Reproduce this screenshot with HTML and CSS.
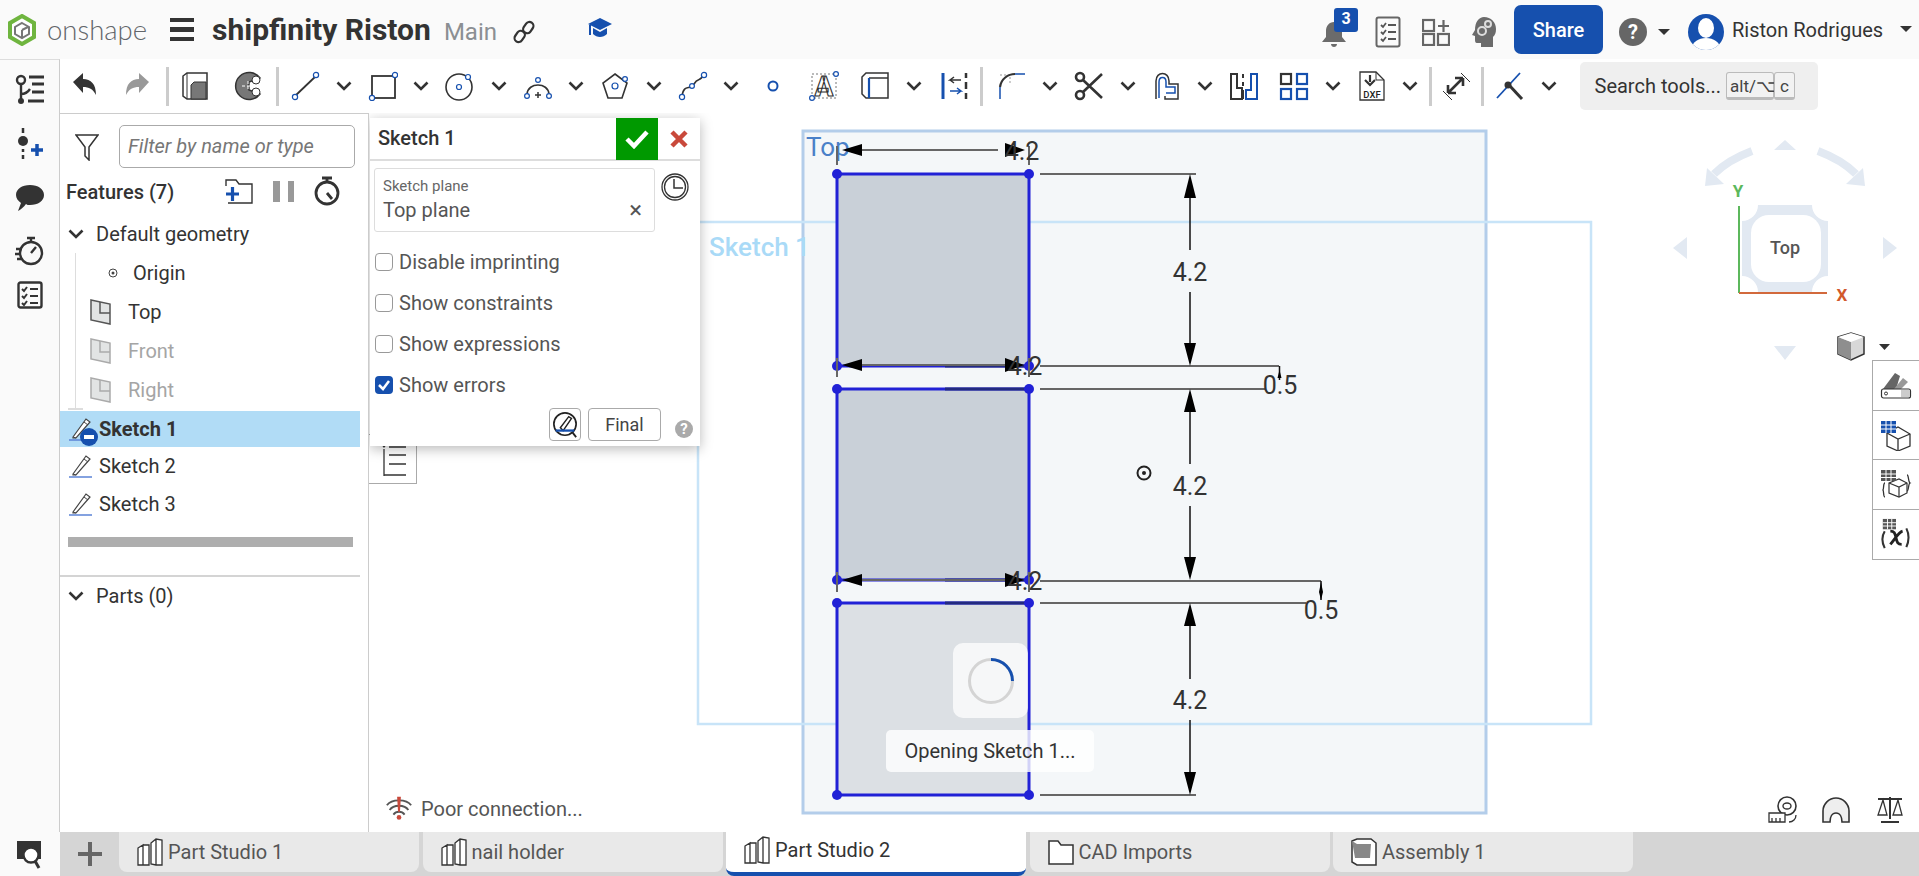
FILE: index.html
```html
<!DOCTYPE html>
<html lang="en">
<head>
<meta charset="utf-8">
<title>shipfinity Riston</title>
<link rel="stylesheet" href="styles.css">
</head>
<body>
<svg class="defs" width="0" height="0" aria-hidden="true">
  <symbol id="chev" viewBox="0 0 16 12"><path d="M1.5 2.5 8 9l6.500-6.500" fill="none" stroke="#333" stroke-width="2.600"/></symbol>
  <symbol id="plane" viewBox="0 0 22 26"><path d="M1 1 20 5v20L1 21z" fill="#e2e4e4" stroke="currentColor" stroke-width="1.500"/><path d="M10 3v11h10" fill="none" stroke="currentColor" stroke-width="1.500"/></symbol>
  <symbol id="sketch" viewBox="0 0 24 24"><path d="M4 20 17 2l4 3L7 21H4z" fill="#fff" stroke="#444" stroke-width="1.200"/><path d="M4 20l3 1M15 5l4 3" stroke="#444" fill="none"/><path d="M0 23h23" stroke="#5b83d6" stroke-width="1.500"/></symbol>
  <symbol id="studio" viewBox="0 0 26 28"><path d="M1 10 6 7v20H1zM6 7h6v20H6zM14 5l5-4 6 1v25h-6l-5-1zM19 1v26" fill="#fff" stroke="#333" stroke-width="1.300"/></symbol>
</svg>

<header class="top">
  <svg class="logo" viewBox="0 0 28 32"><path d="M14 2 26 9v14l-12 7-12-7V9z" fill="#fff" stroke="#6fb53f" stroke-width="4"/><path d="M14 9l7 4v7l-7 4-7-4v-7z" fill="none" stroke="#777" stroke-width="2"/><path d="M14 16v7M14 16l6-3" stroke="#777" stroke-width="2"/></svg>
  <span class="brand">onshape</span>
  <span class="burger"><i></i><i></i><i></i></span>
  <h1 class="doc">shipfinity Riston</h1>
  <span class="branch">Main</span>
  <svg class="link" viewBox="0 0 22 24"><g fill="none" stroke="#333" stroke-width="2.200"><rect x="11" y="1.500" width="8" height="12" rx="4" transform="rotate(35 15 8)"/><rect x="3" y="10.500" width="8" height="12" rx="4" transform="rotate(35 7 16)"/></g></svg>
  <svg class="cap" viewBox="0 0 26 24"><path d="M13 2 25 8 13 14 1 8z" fill="#1650ae"/><path d="M6 12v6c4 4 10 4 14 0v-6l-7 4z" fill="#1650ae"/><path d="M3 9v10" stroke="#1650ae" stroke-width="2"/></svg>
  <span class="spacer"></span>
  <span class="bell-wrap">
    <svg class="bell" viewBox="0 0 26 30"><path d="M13 3c5 0 8 4 8 9v6l4 5H1l4-5v-6c0-5 3-9 8-9zM10 25h6c0 4-6 4-6 0z" fill="#6b6b6b"/></svg>
    <b class="badge">3</b>
  </span>
  <svg class="hicon tasks" viewBox="0 0 26 32"><rect x="1.500" y="1.500" width="23" height="29" rx="2" fill="none" stroke="#666" stroke-width="2"/><path d="M6 9l2 2 3-4M6 16l2 2 3-4M6 23l2 2 3-4M13 9h8M13 16h8M13 23h8" fill="none" stroke="#555" stroke-width="1.800"/></svg>
  <svg class="hicon apps" viewBox="0 0 28 28"><g fill="none" stroke="#666" stroke-width="2.200"><rect x="1" y="2" width="11" height="11"/><rect x="1" y="16" width="11" height="11"/><rect x="16" y="16" width="11" height="11"/><path d="M16 8h11M21.500 2v12"/></g></svg>
  <svg class="hicon head" viewBox="0 0 26 32"><path d="M13 1c7 0 12 5 12 12 0 4-1 6-3 8v10H10v-4H6c-2 0-2-2-2-4v-3l-3-1 3-5C4 6 8 1 13 1z" fill="#6b6b6b"/><circle cx="11" cy="15" r="4" fill="none" stroke="#ddd" stroke-width="2"/><circle cx="17" cy="8" r="3" fill="none" stroke="#ddd" stroke-width="2"/></svg>
  <button class="share">Share</button>
  <svg class="help" viewBox="0 0 28 28"><circle cx="14" cy="14" r="14" fill="#666"/><text x="14" y="21" class="help-q">?</text></svg>
  <i class="caret caret-help"></i>
  <svg class="avatar" viewBox="0 0 36 36"><defs><clipPath id="av"><circle cx="18" cy="18" r="18"/></clipPath></defs><g clip-path="url(#av)"><rect width="36" height="36" fill="#1650ae"/><ellipse cx="18" cy="14" rx="8" ry="10" fill="#fff"/><ellipse cx="18" cy="34" rx="14" ry="10" fill="#fff"/></g></svg>
  <span class="user">Riston Rodrigues</span>
  <i class="caret caret-user"></i>
</header>

<div class="middle">
  <nav class="rail">
    <svg class="rail-icon" viewBox="0 0 30 32"><g fill="none" stroke="#333" stroke-width="2.400"><circle cx="6" cy="6" r="4"/><path d="M6 10v16M6 20c5 0 7-2 9-5"/></g><circle cx="6" cy="27" r="3" fill="#333"/><path d="M14 3h15M17 10h12M17 18h12M13 27h16" stroke="#333" stroke-width="3"/></svg>
    <svg class="rail-icon" viewBox="0 0 30 32"><path d="M8 0v5M8 21v3M8 27v4" stroke="#333" stroke-width="2.500"/><circle cx="8" cy="13" r="5" fill="#333"/><path d="M16 22h12M22 16v12" stroke="#1650ae" stroke-width="3.500"/></svg>
    <svg class="rail-icon" viewBox="0 0 30 28"><path d="M15 1c8 0 14 4 14 10s-6 10-14 10c-2 0-3 0-4-1-2 3-6 6-8 7l3-8C3 17 1 14 1 11 1 5 7 1 15 1z" fill="#333"/></svg>
    <svg class="rail-icon" viewBox="0 0 30 32"><g fill="none" stroke="#333" stroke-width="2.400"><circle cx="16" cy="18" r="11"/><path d="M12 3h8M16 3v4M16 18l5-6M1 14h6M0 19h5M2 24h5"/></g></svg>
    <svg class="rail-icon rail-last" viewBox="0 0 26 28"><rect x="1.500" y="1.500" width="23" height="25" rx="2" fill="none" stroke="#333" stroke-width="2.400"/><path d="M5 8l2 2 3-4M5 15l2 2 3-4M5 22l2 2 3-4M13 8h8M13 15h8M13 22h8" fill="none" stroke="#333" stroke-width="2"/></svg>
  </nav>

  <div class="work">
    <div class="toolbar">
      <span class="tool w50"><svg viewBox="0 0 30 30"><path d="M3 11 13 2v6c8 0 13 5 13 16-3-6-7-8-13-8v6z" fill="#333"/></svg></span>
      <span class="tool w54"><svg viewBox="0 0 30 30"><path d="M27 11 17 2v6C9 8 4 13 4 24c3-6 7-8 13-8v6z" fill="#999"/></svg></span>
      <i class="sep"></i>
      <span class="tool w52"><svg viewBox="0 0 30 30"><path d="M2 5 6 2h20v26H6l-4-3z" fill="#fff" stroke="#333" stroke-width="1.500"/><path d="M6 2v26" stroke="#333"/><path d="M10 14l3-3h12v17H10z" fill="#777" stroke="#333"/></svg></span>
      <span class="tool w52"><svg viewBox="0 0 30 30"><path d="M27 7A13.500 13.500 0 1 0 27 23L16 19v-8z" fill="#777" stroke="#333" stroke-width="1.500"/><circle cx="23" cy="9" r="4" fill="#fff" stroke="#333"/><circle cx="23" cy="21" r="4" fill="#fff" stroke="#333"/><path d="M9 15h20M15 10v10" stroke="#fff" stroke-dasharray="3 2"/></svg></span>
      <i class="sep"></i>
      <span class="tool t44 ml3"><svg viewBox="0 0 30 30"><path d="M5 25 26 5" stroke="#333" stroke-width="1.800"/><circle cx="5" cy="26" r="2.600" class="pt"/><circle cx="26" cy="4" r="2.600" class="pt"/></svg></span><span class="chev"><svg><use href="#chev"/></svg></span>
      <span class="tool t44"><svg viewBox="0 0 30 30"><rect x="4" y="5" width="23" height="22" fill="none" stroke="#333" stroke-width="1.800"/><circle cx="4" cy="27" r="2.600" class="pt"/><circle cx="27" cy="4" r="2.600" class="pt"/></svg></span><span class="chev"><svg><use href="#chev"/></svg></span>
      <span class="tool t44"><svg viewBox="0 0 30 30"><circle cx="14" cy="16" r="13" fill="none" stroke="#333" stroke-width="1.600"/><circle cx="14" cy="16" r="2.500" class="pt"/><circle cx="23" cy="6" r="2.500" class="pt"/></svg></span><span class="chev"><svg><use href="#chev"/></svg></span>
      <span class="tool t44"><svg viewBox="0 0 30 30"><path d="M4 23C5 11 25 11 26 23" fill="none" stroke="#333" stroke-width="1.600"/><circle cx="4" cy="25" r="2.400" class="pt"/><circle cx="26" cy="25" r="2.400" class="pt"/><circle cx="15" cy="9" r="2.400" class="pt"/><path d="M12 24h6M15 21v6" stroke="#333" stroke-width="1.500"/></svg></span><span class="chev"><svg><use href="#chev"/></svg></span>
      <span class="tool t44"><svg viewBox="0 0 30 30"><path d="M15 3 27 12l-5 15H8L3 12z" fill="none" stroke="#333" stroke-width="1.600"/><circle cx="15" cy="15" r="3" class="pt"/><circle cx="25" cy="8" r="2.400" class="pt"/></svg></span><span class="chev"><svg><use href="#chev"/></svg></span>
      <span class="tool t44"><svg viewBox="0 0 30 30"><path d="M4 25C6 12 12 20 16 13s7-2 9-9" fill="none" stroke="#333" stroke-width="1.600"/><circle cx="4" cy="26" r="2.600" class="pt"/><circle cx="14" cy="15" r="2.400" class="pt"/><circle cx="26" cy="4" r="2.600" class="pt"/></svg></span><span class="chev"><svg><use href="#chev"/></svg></span>
      <span class="tool w50"><svg viewBox="0 0 30 30"><circle cx="15" cy="15" r="4.500" fill="#fff" stroke="#1650ae" stroke-width="2"/></svg></span>
      <span class="tool w52"><svg viewBox="0 0 30 30"><rect x="3" y="3" width="24" height="24" fill="none" stroke="#777" stroke-dasharray="2 2"/><text x="15" y="25" class="tool-a">A</text><circle cx="3" cy="27" r="2.400" class="pt"/><circle cx="27" cy="3" r="2.400" class="pt"/></svg></span>
      <span class="tool t44 ml3"><svg viewBox="0 0 30 30"><path d="M2 6 6 2h22v25H6l-4-4z" fill="#fff" stroke="#333" stroke-width="1.500"/><path d="M9 7h19" stroke="#333" stroke-width="1.500"/><path d="M9 7v20" stroke="#1650ae" stroke-width="2.200"/></svg></span><span class="chev"><svg><use href="#chev"/></svg></span>
      <span class="tool w48"><svg viewBox="0 0 30 30"><path d="M3 2v26" stroke="#1650ae" stroke-width="3"/><path d="M26 2v5M26 11v7M26 22v6" stroke="#333" stroke-width="2.500"/><path d="M21 9H10l4-3M10 9l4 3" fill="none" stroke="#333" stroke-width="1.500"/><path d="M10 20h11l-4-3M21 20l-4 3" fill="none" stroke="#1650ae" stroke-width="1.500"/></svg></span>
      <i class="sep"></i>
      <span class="tool t44 ml5"><svg viewBox="0 0 30 30"><path d="M3 4h10v10" fill="none" stroke="#999" stroke-dasharray="2 2"/><path d="M3 16C4 8 11 3 18 3" fill="none" stroke="#333" stroke-width="2.200"/><path d="M18 3h10M3 16v12" stroke="#1650ae" stroke-width="1.500"/></svg></span><span class="chev"><svg><use href="#chev"/></svg></span>
      <span class="tool t44"><svg viewBox="0 0 30 30"><g fill="none" stroke="#333" stroke-width="2.600"><circle cx="6" cy="6" r="4"/><circle cx="6" cy="24" r="4"/><path d="M9 9l19 18M9 21 28 3"/></g></svg></span><span class="chev"><svg><use href="#chev"/></svg></span>
      <span class="tool t44"><svg viewBox="0 0 30 30"><path d="M4 28V10c0-10 13-10 13 0v3h9v15H13v-3" fill="none" stroke="#333" stroke-width="1.500"/><path d="M7 27V11c0-6 7-6 7 0v5h9v6h-9" fill="none" stroke="#1650ae" stroke-width="1.500"/></svg></span><span class="chev"><svg><use href="#chev"/></svg></span>
      <span class="tool t44"><svg viewBox="0 0 30 30"><path d="M2 3h6v14h5v11H2zM14 3v4M14 11v4M14 19v9" fill="none" stroke="#333" stroke-width="2"/><path d="M28 3v25H17v-9h5V3z" fill="none" stroke="#1650ae" stroke-width="2"/></svg></span>
      <span class="tool t44 ml6"><svg viewBox="0 0 30 30"><g fill="none" stroke="#333" stroke-width="2.200"><rect x="2" y="3" width="10" height="10"/></g><g fill="none" stroke="#1650ae" stroke-width="2.200"><rect x="18" y="3" width="10" height="10"/><rect x="2" y="18" width="10" height="10"/><rect x="18" y="18" width="10" height="10"/></g></svg></span><span class="chev"><svg><use href="#chev"/></svg></span>
      <span class="tool t44"><svg viewBox="0 0 30 30"><path d="M3 1h16l8 8v20H3z" fill="#fff" stroke="#333" stroke-width="1.300"/><path d="M19 1v8h8" fill="none" stroke="#333"/><path d="M13 4v7M8 9l5 5 5-5" fill="none" stroke="#333" stroke-width="2.200"/><text x="15" y="27" class="tool-dxf">DXF</text></svg></span><span class="chev"><svg><use href="#chev"/></svg></span>
      <i class="sep"></i>
      <span class="tool w46"><svg viewBox="0 0 30 30"><path d="M7 22 22 7M22 7h-8M22 7v8M7 22h8M7 22v-8" fill="none" stroke="#333" stroke-width="2.600"/><path d="M20 2 29 11M2 20l9 9" stroke="#333"/></svg></span>
      <i class="sep"></i>
      <span class="tool t44 ml3"><svg viewBox="0 0 30 30"><path d="M2 27 14 14" stroke="#1650ae" stroke-width="1.800"/><path d="M14 14 25 2" stroke="#1650ae" stroke-width="1.800"/><path d="M14 14 27 28" stroke="#333" stroke-width="3"/><circle cx="13" cy="14" r="3.500" fill="#333"/></svg></span><span class="chev"><svg><use href="#chev"/></svg></span>
      <div class="search">
        <span class="search-text">Search tools...</span>
        <kbd class="key key-alt">alt/⌥</kbd><kbd class="key">c</kbd>
      </div>
    </div>

    <div class="body">
      <aside class="panel">
        <div class="filter">
          <svg class="funnel" viewBox="0 0 24 28"><path d="M1 2h22l-9 12v13l-4-4v-9z" fill="none" stroke="#333" stroke-width="1.500"/></svg>
          <div class="filter-input">Filter by name or type</div>
        </div>
        <div class="features-head">
          <span class="features-title">Features (7)</span>
          <svg class="fh-folder" viewBox="0 0 28 26"><path d="M1 8V2h10l3 4h13v19H3" fill="none" stroke="#333" stroke-width="1.400"/><path d="M1 16h13M7.500 9v14" stroke="#1650ae" stroke-width="3.200"/></svg>
          <span class="pause"><i></i><i></i></span>
          <svg class="fh-watch" viewBox="0 0 26 30"><g fill="none" stroke="#333" stroke-width="2.800"><circle cx="13" cy="17" r="11"/><path d="M8 2h10M13 2v4M13 17l5 6"/></g></svg>
        </div>
        <div class="row group"><svg class="row-chev"><use href="#chev"/></svg>Default geometry</div>
        <div class="tree">
          <div class="row item"><svg class="row-origin" viewBox="0 0 10 10"><circle cx="5" cy="5" r="4" fill="none" stroke="#444"/><circle cx="5" cy="5" r="1.500" fill="#444"/></svg>Origin</div>
          <div class="row item"><svg class="row-plane"><use href="#plane"/></svg>Top</div>
          <div class="row item dim"><svg class="row-plane"><use href="#plane"/></svg>Front</div>
          <div class="row item dim"><svg class="row-plane"><use href="#plane"/></svg>Right</div>
        </div>
        <div class="row sk selected"><span class="sk-icon"><svg><use href="#sketch"/></svg><b class="minus"></b></span>Sketch 1</div>
        <div class="row sk"><span class="sk-icon"><svg><use href="#sketch"/></svg></span>Sketch 2</div>
        <div class="row sk"><span class="sk-icon"><svg><use href="#sketch"/></svg></span>Sketch 3</div>
        <div class="greybar"></div>
        <div class="divider"></div>
        <div class="row group"><svg class="row-chev"><use href="#chev"/></svg>Parts (0)</div>
      </aside>

      <section class="viewport">
        <svg class="canvas" viewBox="369 113 1550 719" width="1550" height="719">
          <rect x="803" y="131" width="683" height="682" class="plane-top"/>
          <rect x="698" y="222" width="893" height="502" class="plane-sketch"/>
          <text x="709" y="256" class="lbl-sketch">Sketch 1</text>
          <text x="806" y="156" class="lbl-top">Top</text>

          <rect x="837" y="174" width="192" height="192" class="face"/>
          <rect x="837" y="389" width="192" height="192" class="face"/>
          <rect x="837" y="603" width="192" height="192" class="face face-light"/>
          <g class="edge">
            <rect x="837" y="174" width="192" height="192"/>
            <rect x="837" y="389" width="192" height="191"/>
            <rect x="837" y="603" width="192" height="192"/>
          </g>
          <path class="edge-dark" d="M945 366H1029M945 389H1029M945 580H1029M945 603H1029"/>
          <g class="dot">
            <circle cx="837" cy="174" r="5"/><circle cx="1029" cy="174" r="5"/>
            <circle cx="837" cy="366" r="5"/><circle cx="1029" cy="366" r="5"/>
            <circle cx="837" cy="389" r="5"/><circle cx="1029" cy="389" r="5"/>
            <circle cx="837" cy="580" r="5"/><circle cx="1029" cy="580" r="5"/>
            <circle cx="837" cy="603" r="5"/><circle cx="1029" cy="603" r="5"/>
            <circle cx="837" cy="795" r="5"/><circle cx="1029" cy="795" r="5"/>
          </g>

          <g class="wit">
            <path d="M837 146V165M1029 146V165M837 358V377M1029 358V377M837 572V592M1029 572V592"/>
            <path d="M862 150H998M862 365H1006M862 580H1006"/>
            <path d="M1040 174H1196M1040 366H1279M1040 389H1266M1040 581H1321M1040 603H1306M1040 795H1196"/>
          </g>
          <g class="arrowline">
            <path d="M1190 196V250M1190 292V345M1190 410V464M1190 506V560M1190 625V679M1190 720V773"/>
            <path d="M1279.500 366V380M1321 581V600"/>
          </g>
          <g class="head">
            <path d="M842 150 862 144V156zM1025 150 1005 143V157zM842 365 862 359V371zM1024 365 1005 358V372zM842 580 862 574V586zM1024 580 1005 573V587z"/>
            <path d="M1190 174 1184 198H1196zM1190 366 1184 343H1196zM1190 389 1184 412H1196zM1190 580 1184 557H1196zM1190 603 1184 626H1196zM1190 795 1184 772H1196z"/>
            <path d="M1279.500 370 1277.500 378H1281.500zM1321 582 1319 592 1321 600 1323 592z"/>
          </g>
          <g class="dim-text">
            <text x="1022" y="160">4.2</text>
            <text x="1190" y="281">4.2</text>
            <text x="1025" y="375">4.2</text>
            <text x="1280" y="394">0.5</text>
            <text x="1190" y="495">4.2</text>
            <text x="1025" y="590">4.2</text>
            <text x="1321" y="619">0.5</text>
            <text x="1190" y="709">4.2</text>
          </g>
          <circle cx="1144" cy="473" r="6.500" fill="none" stroke="#222" stroke-width="2"/>
          <circle cx="1144" cy="473" r="2" fill="#222"/>

          <g class="vc">
            <path d="M1785 140 1774 150H1796zM1785 360 1774 346H1796zM1673 248 1687 237V259zM1897 248 1883 237V259z"/>
            <path d="M1705 186 1707 168 1724 184zM1865 186 1863 168 1846 184z"/>
            <path d="M1758 205H1812A16 16 0 0 0 1828 221V276A16 16 0 0 0 1812 292H1758A16 16 0 0 0 1742 276V221A16 16 0 0 0 1758 205Z"/>
          </g>
          <path class="vc-arc" d="M1752 151Q1728 160 1714 174M1818 151Q1842 160 1856 174"/>
          <rect x="1751" y="215" width="70" height="67" rx="18" fill="#fff"/>
          <text x="1785" y="254" class="vc-top">Top</text>
          <path d="M1739 206V293" stroke="#5cb85c" stroke-width="2"/>
          <path d="M1739 293H1827" stroke="#d2693c" stroke-width="2"/>
          <text x="1738" y="197" class="vc-y">Y</text>
          <text x="1842" y="301" class="vc-x">X</text>
          <path d="M1838 337 1851 333 1864 337V354L1851 360 1838 354z" fill="#d8d8d8" stroke="#333" stroke-width="1.500"/>
          <path d="M1838 337 1851 342V360L1838 354z" fill="#8e8e8e"/>
          <path d="M1838 337 1851 333 1864 337 1851 342z" fill="#fff"/>
          <path d="M1879 344H1890L1884.500 350z" fill="#333"/>
        </svg>

        <div class="dialog">
          <div class="dlg-head">
            <span class="dlg-title">Sketch 1</span>
            <span class="dlg-ok"><svg viewBox="0 0 24 20"><path d="M2 10l7 7L22 3" fill="none" stroke="#fff" stroke-width="4.500"/></svg></span>
            <span class="dlg-x"><svg viewBox="0 0 20 20"><path d="M3 3l14 14M17 3 3 17" stroke="#c9493b" stroke-width="4.500"/></svg></span>
          </div>
          <div class="plane-line">
            <div class="field">
              <label class="field-label">Sketch plane</label>
              <div class="field-value"><span>Top plane</span><span class="field-x">×</span></div>
            </div>
            <svg class="clock" viewBox="0 0 28 28"><circle cx="14" cy="14" r="13" fill="none" stroke="#333" stroke-width="1.300"/><circle cx="14" cy="14" r="10.500" fill="none" stroke="#333" stroke-width="1.300"/><path d="M13 6v9h9" fill="none" stroke="#333" stroke-width="1.500"/></svg>
          </div>
          <label class="check"><i class="box"></i>Disable imprinting</label>
          <label class="check"><i class="box"></i>Show constraints</label>
          <label class="check"><i class="box"></i>Show expressions</label>
          <label class="check"><i class="box on"><svg viewBox="0 0 18 18"><path d="M4 9l4 4 6-8" fill="none" stroke="#fff" stroke-width="2.500"/></svg></i>Show errors</label>
          <div class="dlg-foot">
            <span class="icon-btn"><svg viewBox="0 0 28 30"><circle cx="14" cy="14" r="12" fill="none" stroke="#222" stroke-width="1.800"/><path d="M9 18 18 6l3 2-9 13z" fill="#fff" stroke="#222" stroke-width="1.500"/><path d="M4 21h20" stroke="#1650ae" stroke-width="2.500"/><path d="M22 23l4 5" stroke="#222" stroke-width="2"/></svg></span>
            <span class="final">Final</span>
            <span class="qmark">?</span>
          </div>
        </div>
        <div class="list-tab"><svg viewBox="0 0 26 36"><path d="M1 2l3 4 3-4M4 8v27M9 6h17M9 14h17M9 23h17M4 34h22" fill="none" stroke="#333" stroke-width="1.300"/></svg></div>

        <div class="spin-box"><svg viewBox="0 0 48 48"><circle cx="24" cy="24" r="21.500" fill="none" stroke="#d4d4d4" stroke-width="3"/><path d="M24 2.500A21.500 21.500 0 0 1 45.500 24" fill="none" stroke="#1650ae" stroke-width="3"/></svg></div>
        <div class="toast">Opening Sketch 1...</div>
        <div class="poor">
          <svg viewBox="0 0 30 26"><g fill="none" stroke="#555" stroke-width="2"><path d="M2 9C7 2 23 2 28 9M5 14C9 8 21 8 25 14M9 19c3-4 9-4 12 0"/></g><path d="M13 0h4l-1 16h-2z" fill="#c9493b"/><circle cx="15" cy="22" r="2.500" fill="#c9493b"/></svg>
          Poor connection...
        </div>
        <div class="measure">
          <svg viewBox="0 0 30 30"><circle cx="20" cy="11" r="9" fill="none" stroke="#333" stroke-width="1.600"/><ellipse cx="20" cy="11" rx="4" ry="3" fill="none" stroke="#333" stroke-width="1.400"/><path d="M2 18h16v9H2zM5 23v4M9 23v4M13 23v4M22 27c4 0 7-3 7-7" fill="#fff" stroke="#333" stroke-width="1.300"/></svg>
          <svg viewBox="0 0 30 30"><path d="M2 27V16C2 9 8 3 15 3s13 6 13 13v11H21c0-5-2-9-6-9s-6 4-6 9z" fill="#eee" stroke="#333" stroke-width="1.600"/></svg>
          <svg viewBox="0 0 30 30"><path d="M3 4h24M15 2v22M6 27h18" stroke="#333" stroke-width="2"/><path d="M3 20h9L8 5zM18 20h9L23 5z" fill="#fff" stroke="#333" stroke-width="1.300"/></svg>
        </div>
        <div class="side-stack">
          <span class="side"><svg viewBox="0 0 32 30"><path d="M3 19 15 3l5 3-4 13z" fill="#666"/><path d="M14 19l9-11 5 4-7 7z" fill="#999"/><rect x="1.500" y="19" width="29" height="9" rx="2" fill="#fff" stroke="#333" stroke-width="1.200"/><rect x="21" y="20" width="9" height="7" fill="#ccc"/><circle cx="6" cy="23.500" r="1.500" fill="none" stroke="#333"/></svg></span>
          <span class="side"><svg viewBox="0 0 32 30"><path d="M7 13 18 7l12 7v12l-12 5-11-5z" fill="none" stroke="#333" stroke-width="1.300"/><path d="M7 13l11 6 12-5M18 19v12" fill="none" stroke="#333" stroke-width="1.300"/><rect x="1" y="1" width="15" height="12" fill="#1650ae"/><path d="M1 5h15M1 9h15M6 1v12M11 1v12" stroke="#fff" stroke-width="1"/></svg></span>
          <span class="side"><svg viewBox="0 0 32 30"><path d="M9 14 19 10l8 4v10l-8 4-10-4z" fill="none" stroke="#333" stroke-width="1.200"/><path d="M9 14l10 4 8-4M19 18v10" fill="none" stroke="#333" stroke-width="1.200"/><rect x="1" y="1" width="15" height="11" fill="#555"/><path d="M1 5h15M1 8.500h15M6 1v11M11 1v11" stroke="#fff" stroke-width="1"/><path d="M5 14c-2 0-1 6-2 7 1 1 0 7 2 7M27 6c2 0 1 7 3 8-2 1-1 8-3 8" fill="none" stroke="#333" stroke-width="1.300"/></svg></span>
          <span class="side"><svg viewBox="0 0 32 34"><rect x="2" y="1" width="14" height="11" fill="#555"/><path d="M2 5h14M2 8.500h14M7 1v11M11.500 1v11" stroke="#fff" stroke-width="1"/><path d="M4 14c-3 5-3 12 0 18M27 11c3 6 3 13 0 20" fill="none" stroke="#333" stroke-width="2.200"/><path d="M10 14c4 0 5 2 6 7s2 7 6 7M23 14c-4 1-8 8-13 14" fill="none" stroke="#222" stroke-width="3"/></svg></span>
        </div>
      </section>
    </div>
  </div>
</div>

<footer class="tabs">
  <div class="tabs-rail"><svg viewBox="0 0 28 32"><path d="M1 3h24v18H1z" fill="#333"/><circle cx="15" cy="17" r="7.500" fill="#fff" stroke="#333" stroke-width="2.400"/><path d="M19 23l4 7" stroke="#333" stroke-width="3"/></svg></div>
  <div class="tabs-add"><svg viewBox="0 0 24 24"><path d="M0 12h24M12 0v24" stroke="#666" stroke-width="4"/></svg></div>
  <div class="tab"><svg class="tab-icon"><use href="#studio"/></svg>Part Studio 1</div>
  <div class="tab"><svg class="tab-icon"><use href="#studio"/></svg>nail holder</div>
  <div class="tab active"><svg class="tab-icon"><use href="#studio"/></svg>Part Studio 2</div>
  <div class="tab"><svg class="tab-icon" viewBox="0 0 26 28"><path d="M1 26V3h9l3 4h12v19z" fill="#fff" stroke="#333" stroke-width="1.500"/></svg>CAD Imports</div>
  <div class="tab"><svg class="tab-icon" viewBox="0 0 26 28"><path d="M1 3 6 1h14l5 4v22H6l-5-3z" fill="#fff" stroke="#333" stroke-width="1.500"/><path d="M1 3l5 3h14l-1 14H4z" fill="#888"/></svg>Assembly 1</div>
</footer>
</body>
</html>
```
FILE: styles.css
```css
* { box-sizing: border-box; }
html, body { margin: 0; height: 100%; }
body {
  width: 1919px; height: 876px; overflow: hidden;
  display: flex; flex-direction: column;
  font-family: Roboto, "Liberation Sans", sans-serif;
  font-size: 20px; color: #333; background: #fff;
}
.defs { position: absolute; }
i { display: block; font-style: normal; }

/* header */
.top { height: 59px; flex: none; display: flex; align-items: center; background: #fafafa; }
.logo { width: 28px; height: 32px; margin-left: 8px; flex: none; }
.brand { margin-left: 11px; width: 102px; font-family: Lato, sans-serif; font-weight: 300; font-size: 27.500px; color: #62666a; }
.burger { margin-left: 21px; width: 24px; display: flex; flex-direction: column; gap: 5px; }
.burger i { height: 4.500px; background: #333; }
.doc { margin: 0 0 0 18px; font-size: 30px; font-weight: 700; color: #333; white-space: nowrap; }
.branch { margin-left: 13px; margin-top: 4px; font-size: 24px; color: #8b8f93; }
.link { width: 22px; height: 24px; margin-left: 16px; margin-top: 4px; }
.cap { width: 26px; height: 24px; margin-left: 52px; margin-top: -3px; }
.spacer { flex: 1; }
.bell-wrap { position: relative; width: 48px; height: 59px; flex: none; }
.bell { position: absolute; left: 0; top: 19px; width: 26px; height: 30px; }
.badge { position: absolute; left: 13px; top: 8px; width: 24px; height: 24px; border-radius: 3px; background: #1650ae; color: #fff; font-size: 16px; text-align: center; line-height: 22px; }
.hicon { flex: none; margin-top: 5px; }
.tasks { width: 26px; height: 32px; margin-left: 6px; }
.apps { width: 28px; height: 28px; margin-left: 21px; }
.head { width: 26px; height: 32px; margin-left: 21px; }
.share { width: 89px; height: 49px; margin-left: 17px; border: 0; border-radius: 7px; background: #1650ae; color: #fff; font: 500 20px Roboto, sans-serif; }
.help { width: 28px; height: 28px; margin-left: 16px; margin-top: 5px; }
.help-q { font: 700 20px Roboto, sans-serif; fill: #fff; text-anchor: middle; }
.caret { width: 0; height: 0; border-left: 6px solid transparent; border-right: 6px solid transparent; border-top: 6px solid #333; }
.caret-help { margin-left: 11px; margin-top: 4px; }
.avatar { width: 36px; height: 36px; margin-left: 18px; margin-top: 5px; }
.user { margin-left: 8px; width: 157px; font-size: 20px; white-space: nowrap; }
.caret-user { margin-left: 11px; margin-right: 7px; margin-top: -2px; }

/* layout */
.middle { flex: 1; min-height: 0; display: flex; }
.rail { width: 60px; flex: none; background: #fafafa; border-top: 1px solid #ddd; border-right: 1px solid #ccc; display: flex; flex-direction: column; align-items: center; padding-top: 14px; }
.rail-icon { width: 30px; height: 32px; margin-bottom: 22px; flex: none; }
.rail-icon:nth-child(3) { margin-top: 2px; margin-bottom: 23px; height: 28px; }
.rail-icon:nth-child(4) { margin-bottom: 14px; }
.rail-last { height: 28px; width: 26px; margin-top: 0; }
.rail-last::before { content: ""; }
.work { flex: 1; min-width: 0; display: flex; flex-direction: column; }

/* toolbar */
.toolbar { height: 54px; flex: none; display: flex; align-items: center; background: #fff; }
.tool { height: 54px; display: flex; align-items: center; justify-content: center; flex: none; }
.tool svg { width: 30px; height: 30px; }
.pt { fill: #fff; stroke: #1650ae; stroke-width: 1.200; }
.tool-a { font: 900 27px Roboto, sans-serif; fill: #fff; stroke: #333; stroke-width: 1.100; text-anchor: middle; }
.tool-dxf { font: 500 9.500px Roboto, sans-serif; fill: #222; text-anchor: middle; }
.t44 { width: 44px; }
.w46 { width: 46px; }
.w48 { width: 48px; }
.w50 { width: 50px; }
.w52 { width: 52px; }
.w54 { width: 54px; }
.ml3 { margin-left: 3px; }
.ml5 { margin-left: 5px; }
.ml6 { margin-left: 6px; }
.chev { width: 33.500px; height: 54px; flex: none; display: flex; align-items: center; justify-content: center; }
.chev svg { width: 16px; height: 12px; }
.sep { width: 3px; height: 39px; margin: 0 1.500px; background: #ccc; flex: none; }
.search { width: 238px; height: 48px; margin-left: 14px; display: flex; align-items: center; padding-left: 15px; border-radius: 5px; background: #efefef; }
.search-text { font-size: 20px; margin-right: 5px; white-space: nowrap; }
.key { height: 28px; padding: 0 5px; border: 1px solid #bbb; border-bottom-width: 3px; border-radius: 3px; background: #f2f2f2; font: 17px Roboto, sans-serif; line-height: 26px; color: #444; }
.key-alt { width: 48px; white-space: nowrap; padding: 0 3px; }

.body { flex: 1; min-height: 0; display: flex; }
.panel { width: 309px; flex: none; border-top: 1px solid #ccc; border-right: 1px solid #ccc; background: #fff; padding-right: 8px; }

.filter { height: 54px; padding-top: 11px; display: flex; align-items: flex-start; }
.funnel { width: 24px; height: 28px; margin: 8px 0 0 15px; }
.filter-input { width: 236px; height: 43px; margin-left: 20px; border: 1px solid #aaa; border-radius: 5px; padding-left: 8px; font-style: italic; line-height: 41px; color: #777; }
.features-head { height: 46px; display: flex; align-items: center; padding-left: 6px; }
.features-title { font-weight: 500; width: 153px; margin-top: 2px; white-space: nowrap; }
.fh-folder { width: 28px; height: 26px; margin-left: 6px; }
.pause { margin-left: 20px; display: flex; gap: 8px; }
.pause i { width: 6.500px; height: 21px; background: #999; }
.fh-watch { width: 26px; height: 30px; margin-left: 20px; }

.row { height: 39px; display: flex; align-items: center; white-space: nowrap; }
.group { padding-left: 7px; }
.row-chev { width: 16px; height: 12px; margin-right: 12px; margin-left: 1px; flex: none; }
.tree { position: relative; margin-left: 15px; border-left: 1px solid #ddd; }
.tree::after { content: ""; position: absolute; left: -8px; bottom: -1px; width: 15px; height: 2px; background: #ddd; }
.item { padding-left: 14px; color: #333; }
.dim { color: #a5a5a5; }
.row-origin { width: 10px; height: 10px; margin: 0 15px 0 18px; flex: none; }
.row-plane { width: 22px; height: 26px; margin-right: 16px; flex: none; color: #555; }
.dim .row-plane { color: #aaa; }
.sk { height: 36px; margin: 1.500px 0; padding-left: 9px; }
.selected { background: #b1dcf6; font-weight: 700; }
.sk-icon { position: relative; width: 24px; height: 24px; margin-right: 6px; flex: none; }
.sk-icon svg { width: 24px; height: 24px; display: block; }
.minus { position: absolute; left: 11px; top: 11px; width: 18px; height: 18px; border-radius: 50%; background: #1650ae; }
.minus::after { content: ""; position: absolute; left: 4px; top: 7px; width: 10px; height: 4px; background: #fff; }
.greybar { height: 10px; margin: 15px 7px 0 8px; background: #aeaeae; }
.divider { height: 2px; margin-top: 28px; background: #d4d4d4; }

/* viewport */
.viewport { flex: 1; min-width: 0; position: relative; overflow: hidden; background: #fff; }
.canvas { position: absolute; left: 0; top: 0; display: block; }
.plane-top { fill: #f4f7f9; stroke: #b3cdea; stroke-width: 3; }
.plane-sketch { fill: none; stroke: #c8e4f8; stroke-width: 2.500; }
.lbl-sketch { font: 500 26px Roboto, sans-serif; fill: #a9daf7; }
.lbl-top { font: 400 26px Roboto, sans-serif; fill: #4a80c8; }
.face { fill: #c9d0d8; }
.face-light { fill: #dce0e4; }
.edge rect { fill: none; stroke: #2121d6; stroke-width: 3; }
.edge-dark { fill: none; stroke: #222a80; stroke-width: 3; }
.dot { fill: #2121d6; }
.wit { fill: none; stroke: #666; stroke-width: 2; }
.arrowline { fill: none; stroke: #111; stroke-width: 1.500; }
.head { fill: #000; }
.dim-text text { font: 400 25px Roboto, sans-serif; fill: #333; text-anchor: middle; }
.vc { fill: #e2e9f2; }
.vc-arc { fill: none; stroke: #e2e9f2; stroke-width: 8; }
.vc-top { font: 500 18px Roboto, sans-serif; fill: #555; text-anchor: middle; }
.vc-y { font: 700 17px Roboto, sans-serif; fill: #5cb85c; text-anchor: middle; }
.vc-x { font: 700 17px Roboto, sans-serif; fill: #d2592c; text-anchor: middle; }

/* dialog */
.dialog { position: absolute; left: 1px; top: 5px; width: 330px; height: 328px; z-index: 3; background: #fff; box-shadow: 0 3px 12px rgba(0, 0, 0, .28); }
.dlg-head { height: 43px; display: flex; align-items: stretch; border-bottom: 2px solid #ddd; }
.dlg-title { flex: 1; padding-left: 8px; line-height: 41px; font-weight: 500; }
.dlg-ok { width: 42px; height: 42px; background: #009900; display: flex; align-items: center; justify-content: center; }
.dlg-ok svg { width: 24px; height: 20px; }
.dlg-x { width: 42px; height: 42px; display: flex; align-items: center; justify-content: center; }
.dlg-x svg { width: 20px; height: 20px; }
.plane-line { display: flex; align-items: flex-start; margin-top: 7px; padding-left: 4px; }
.field { width: 281px; height: 64px; border: 1px solid #ddd; border-radius: 3px; padding: 8px 8px 0 8px; color: #555; }
.field-label { display: block; font-size: 15px; line-height: 18px; color: #666; }
.field-value { display: flex; justify-content: space-between; align-items: center; margin-top: 3px; font-size: 20px; padding-right: 4px; }
.field-x { font-size: 24px; line-height: 24px; color: #555; }
.clock { width: 28px; height: 28px; margin: 5px 0 0 6px; }
.check { height: 41px; display: flex; align-items: center; padding-left: 5px; color: #555; }
.check:first-of-type { margin-top: 9px; }
.box { width: 18px; height: 18px; margin-right: 6px; border: 1.500px solid #999; border-radius: 4px; background: #fff; flex: none; }
.box.on { border: 0; background: #1650ae; }
.box svg { display: block; width: 18px; height: 18px; }
.dlg-foot { display: flex; align-items: flex-start; padding-left: 179px; margin-top: 3px; }
.icon-btn { width: 32px; height: 33px; border: 1px solid #aaa; border-radius: 4px; display: flex; align-items: center; justify-content: center; }
.icon-btn svg { width: 26px; height: 28px; }
.final { width: 73px; height: 33px; margin-left: 7px; border: 1px solid #aaa; border-radius: 4px; text-align: center; line-height: 31px; font-size: 18px; color: #444; }
.qmark { width: 18px; height: 18px; margin: 12px 0 0 14px; border-radius: 50%; background: #aaa; color: #fff; font-size: 15px; font-weight: 700; line-height: 18px; text-align: center; }
.list-tab { position: absolute; left: 0; top: 321px; width: 48px; height: 50px; z-index: 2; background: #fff; border: 1px solid #aaa; border-left: 0; display: flex; align-items: center; justify-content: center; }
.list-tab svg { width: 26px; height: 36px; }

.spin-box { position: absolute; left: 584px; top: 530px; width: 75px; height: 75px; border-radius: 10px; background: rgba(255, 255, 255, .75); display: flex; align-items: center; justify-content: center; }
.spin-box svg { width: 48px; height: 48px; }
.toast { position: absolute; left: 517px; top: 617px; width: 208px; height: 42px; border-radius: 5px; background: rgba(255, 255, 255, .8); text-align: center; line-height: 42px; color: #333; white-space: nowrap; }
.poor { position: absolute; left: 16px; top: 683px; display: flex; align-items: center; gap: 8px; color: #555; white-space: nowrap; }
.poor svg { width: 28px; height: 26px; }
.measure { position: absolute; right: 14px; top: 682px; display: flex; gap: 24px; }
.measure svg { width: 30px; height: 30px; }
.side-stack { position: absolute; right: 0; top: 247px; width: 47px; background: #fff; border: 1px solid #aaa; border-right: 0; }
.side { height: 49.500px; display: flex; align-items: center; justify-content: center; border-bottom: 1px solid #aaa; }
.side:last-child { border-bottom: 0; }
.side svg { width: 32px; height: 32px; }

/* tabs */
.tabs { height: 44px; flex: none; display: flex; background: #d5d5d5; }
.tabs-rail { width: 60px; flex: none; background: #fafafa; display: flex; align-items: center; justify-content: center; }
.tabs-rail svg { width: 28px; height: 32px; }
.tabs-add { width: 59px; flex: none; display: flex; align-items: center; justify-content: center; }
.tabs-add svg { width: 24px; height: 24px; }
.tab { width: 300px; height: 40px; margin-right: 3.500px; flex: none; display: flex; align-items: center; padding-left: 18px; background: #e9e9e9; border-radius: 0 0 8px 8px; color: #555; white-space: nowrap; }
.tab.active { height: 44px; padding-bottom: 4px; background: #fff; border-bottom: 4px solid #1650ae; color: #333; }
.tab-icon { width: 26px; height: 28px; margin-right: 5px; flex: none; }
```
